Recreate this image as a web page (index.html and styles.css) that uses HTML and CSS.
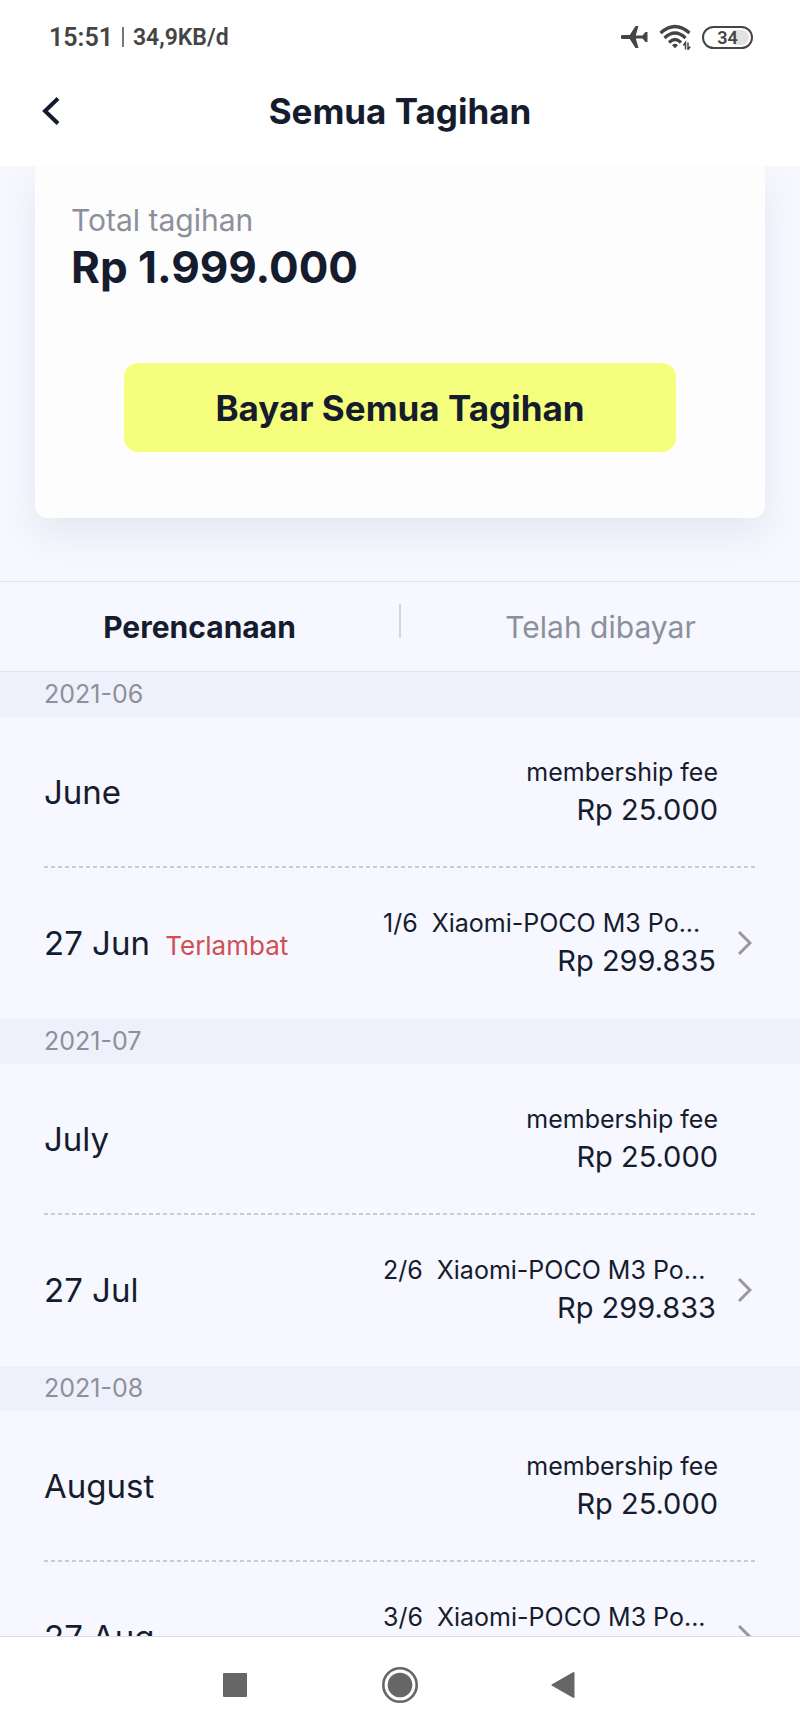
FILE: index.html
```html
<!DOCTYPE html>
<html lang="id">
<head>
  <meta charset="UTF-8">
  <meta name="viewport" content="width=device-width, initial-scale=1">
  <title>Semua Tagihan</title>
  <link rel="stylesheet" href="styles.css">
</head>
<body>
  <header class="top">
    <div class="status">
      <span class="time">15:51</span>
      <span class="bar"></span>
      <span class="speed">34,9KB/d</span>
      <div class="status-icons">
        <svg width="28" height="24" viewBox="0 0 28 24" aria-hidden="true">
          <path fill="#444" d="M1 10.8Q1 10 3 10H9.800L15.500 1H18.500L15.800 10.400H22.500L25.500 7H27.500V17H25.500L22.500 13.600H15.800L18.500 23H15.500L9.800 14H3Q1 14 1 13.200Z"/>
        </svg>
        <svg width="32" height="26" viewBox="0 0 32 26" aria-hidden="true">
          <g fill="none" stroke="#444" stroke-width="3.2">
            <path d="M1.500 9Q16 -4 30.500 9"/>
            <path d="M5.500 14Q16 4 26.500 14"/>
            <path d="M10 18.500Q16 12.500 22 18.500"/>
          </g>
          <path fill="#444" d="M13 21.200Q16 18.400 19 21.200L16 24.200Z"/>
          <path fill="none" stroke="#444" stroke-width="1.5" d="M26.500 25.500V18.500L24.300 21.500M29 18.500V25.500L31.200 22.500"/>
        </svg>
        <span class="battery">34</span>
      </div>
    </div>
    <div class="title-bar">
      <button type="button" class="back" aria-label="Kembali">
        <svg width="20" height="30" viewBox="0 0 20 30"><path fill="none" stroke="#151c2e" stroke-width="4" d="M18 2.500L5 15L18 27.500"/></svg>
      </button>
      <h1>Semua Tagihan</h1>
    </div>
  </header>

  <main>
    <section class="summary">
      <div class="card">
        <p class="label">Total tagihan</p>
        <p class="total">Rp 1.999.000</p>
        <button type="button" class="pay">Bayar Semua Tagihan</button>
      </div>
    </section>

    <div class="tabs" role="tablist">
      <button type="button" class="active" role="tab" aria-selected="true">Perencanaan</button>
      <span class="divider"></span>
      <button type="button" role="tab" aria-selected="false">Telah dibayar</button>
    </div>

    <section class="month">
      <h2>2021-06</h2>
      <div class="row">
        <span class="date">June</span>
        <div class="fee"><span class="name">membership fee</span><span class="amount">Rp 25.000</span></div>
      </div>
      <a class="row detail" href="#jun">
        <span class="date">27 Jun <small>Terlambat</small></span>
        <div class="fee"><span class="name"><span>1/6</span><span>Xiaomi-POCO M3 Po...</span></span><span class="amount">Rp 299.835</span></div>
        <svg class="chevron" width="16" height="26" viewBox="0 0 16 26" aria-hidden="true"><path d="M3 2L14 13L3 24"/></svg>
      </a>
    </section>

    <section class="month">
      <h2>2021-07</h2>
      <div class="row">
        <span class="date">July</span>
        <div class="fee"><span class="name">membership fee</span><span class="amount">Rp 25.000</span></div>
      </div>
      <a class="row detail" href="#jul">
        <span class="date">27 Jul</span>
        <div class="fee"><span class="name"><span>2/6</span><span>Xiaomi-POCO M3 Po...</span></span><span class="amount">Rp 299.833</span></div>
        <svg class="chevron" width="16" height="26" viewBox="0 0 16 26" aria-hidden="true"><path d="M3 2L14 13L3 24"/></svg>
      </a>
    </section>

    <section class="month">
      <h2>2021-08</h2>
      <div class="row">
        <span class="date">August</span>
        <div class="fee"><span class="name">membership fee</span><span class="amount">Rp 25.000</span></div>
      </div>
      <a class="row detail" href="#aug">
        <span class="date">27 Aug</span>
        <div class="fee"><span class="name"><span>3/6</span><span>Xiaomi-POCO M3 Po...</span></span><span class="amount">Rp 299.833</span></div>
        <svg class="chevron" width="16" height="26" viewBox="0 0 16 26" aria-hidden="true"><path d="M3 2L14 13L3 24"/></svg>
      </a>
    </section>
  </main>

  <nav class="system-nav">
    <button type="button" aria-label="Recent apps">
      <svg width="36" height="36" viewBox="0 0 36 36"><rect x="5" y="6" width="24" height="24" rx="1" fill="#666"/></svg>
    </button>
    <button type="button" aria-label="Home">
      <svg width="36" height="36" viewBox="0 0 36 36"><circle cx="18" cy="18" r="16.700" fill="none" stroke="#666" stroke-width="2.600"/><circle cx="18" cy="18" r="12.300" fill="#666"/></svg>
    </button>
    <button type="button" aria-label="Back">
      <svg width="36" height="36" viewBox="0 0 36 36"><path fill="#666" stroke="#666" stroke-width="2" stroke-linejoin="round" d="M6.500 18L27.500 6V30Z"/></svg>
    </button>
  </nav>
</body>
</html>
```
FILE: styles.css
```css
* {
  box-sizing: border-box;
}
body {
  display: flex;
  flex-direction: column;
  height: 100vh;
  margin: 0;
  background: #f6f7ff;
  font-family: Inter, "Liberation Sans", sans-serif;
  color: #151c2e;
}
h1, h2, p {
  margin: 0;
}
button {
  padding: 0;
  border: none;
  background: none;
  color: inherit;
  font-family: inherit;
  cursor: pointer;
}
svg {
  display: block;
}

/* Status bar and title */
.top {
  flex: none;
  background: #fff;
}
.status {
  display: flex;
  align-items: center;
  height: 74px;
  padding: 0 47px 0 49px;
  font-family: Roboto, sans-serif;
  font-size: 25px;
  font-weight: 600;
  color: #444;
}
.speed {
  font-size: 23px;
}
.bar {
  width: 2px;
  height: 20px;
  margin: 0 9px;
  background: #777;
}
.status-icons {
  display: flex;
  align-items: center;
  gap: 11px;
  margin-left: auto;
}
.battery {
  width: 51px;
  height: 23px;
  border: 2px solid #444;
  border-radius: 12px;
  background: linear-gradient(90deg, #fff 66%, #e2e2e2 66%) content-box;
  padding: 2px;
  font-size: 18px;
  line-height: 16px;
  text-align: center;
}
.title-bar {
  display: grid;
  grid-template-columns: 40px 1fr 40px;
  align-items: center;
  height: 92px;
  padding: 0 40px 18px;
}
h1 {
  font-size: 35px;
  line-height: 40px;
  text-align: center;
}

/* Total card */
.summary {
  padding: 0 35px 63px;
  overflow: hidden;
}
.card {
  padding: 36px 36px 66px;
  border-radius: 0 0 12px 12px;
  background: #fdfdfe;
  box-shadow: 0 16px 40px rgba(21,28,46,0.07);
}
.label {
  font-size: 30px;
  line-height: 37px;
  color: #8c909b;
}
.total {
  font-size: 44px;
  font-weight: 700;
  line-height: 56px;
}
.pay {
  display: block;
  width: 84%;
  height: 89px;
  margin: 68px auto 0;
  border-radius: 14px;
  background: #f5ff7d;
  font-size: 35px;
  font-weight: 700;
}

main {
  flex: 1;
  min-height: 0;
  overflow-y: auto;
  scrollbar-width: none;
}
.tabs {
  display: grid;
  grid-template-columns: 1fr 2px 1fr;
  align-items: center;
  height: 91px;
  border-top: 1px solid #e1e3ec;
  border-bottom: 1px solid #e1e3ec;
}
.tabs button {
  height: 88px;
  font-size: 30px;
  color: #8c909b;
}
.tabs .active {
  font-weight: 700;
  color: #151c2e;
}
.divider {
  height: 34px;
  margin-bottom: 12px;
  background: #d4d6de;
}

/* Monthly bills */
h2 {
  padding: 0 44px;
  background: #eef1fb;
  font-size: 25px;
  font-weight: 400;
  line-height: 45px;
  color: #8c909b;
}
.row {
  display: flex;
  align-items: center;
  justify-content: space-between;
  height: 149px;
  margin: 0 44px;
  padding-right: 38px;
  color: inherit;
  text-decoration: none;
}
.detail {
  height: 153px;
  padding-right: 4px;
  background: repeating-linear-gradient(90deg, #c9cbd2 0 4px, transparent 4px 7px) top / 100% 2px no-repeat;
}
.date {
  font-size: 33px;
}
.date small {
  margin-left: 6px;
  font-size: 26px;
  color: #d04f52;
}
.fee {
  display: flex;
  flex-direction: column;
  align-items: flex-end;
}
.detail .fee {
  width: 333px;
  margin-left: auto;
}
.name {
  font-size: 25px;
  line-height: 36px;
}
.detail .name {
  display: flex;
  gap: 14px;
  align-self: flex-start;
  white-space: nowrap;
}
.amount {
  font-size: 29px;
  line-height: 40px;
}
.chevron {
  margin-left: 20px;
  fill: none;
  stroke: #999;
  stroke-width: 3;
}

/* Android buttons */
.system-nav {
  display: flex;
  flex: none;
  align-items: center;
  justify-content: center;
  gap: 128px;
  height: 97px;
  border-top: 1px solid #dcdde2;
  background: #fff;
}
```
